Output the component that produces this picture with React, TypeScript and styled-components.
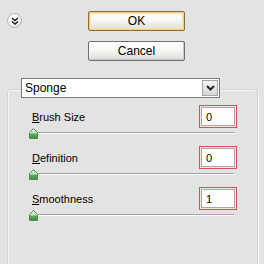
import React from "react";
import styled, { createGlobalStyle } from "styled-components";

const Global = createGlobalStyle`
  html, body { margin: 0; padding: 0; }
  body {
    background: #e3e3e3;
    font-family: "Liberation Sans", Tahoma, Arial, sans-serif;
    font-size: 11px;
    color: #000;
    overflow: hidden;
  }
`;

const Page = styled.div`
  width: 264px;
  height: 264px;
  background: #e3e3e3;
  overflow: hidden;
`;

const TopRow = styled.div`
  display: flex;
  align-items: flex-start;
  padding: 11px 0 0 7px;
`;

const RoundToggle = styled.div`
  width: 15px;
  height: 15px;
  margin-top: 2px;
  border-radius: 50%;
  border: 1px solid #b4b4b4;
  box-sizing: border-box;
  background: radial-gradient(circle at 40% 35%, #ffffff 0%, #f4f4f4 50%, #cfcfcf 100%);
  display: flex;
  align-items: center;
  justify-content: center;
`;

const ButtonColumn = styled.div`
  display: flex;
  flex-direction: column;
  gap: 10px;
  margin-left: 66px;
`;

const PushButton = styled.div<{ $default?: boolean }>`
  width: 97px;
  height: 20px;
  box-sizing: border-box;
  border: 1px solid ${(p) => (p.$default ? "#8a6b3c" : "#6f6f6f")};
  border-radius: 2px;
  background: linear-gradient(#ffffff 0%, #f7f7f5 45%, #e4e4e1 85%, #d2d2cf 100%);
  box-shadow: ${(p) =>
    p.$default
      ? "inset 0 0 0 1px #f6cf86, inset 0 0 0 2px #fbe3ad"
      : "inset -1px -1px 0 #c9c9c6"};
  display: flex;
  align-items: center;
  justify-content: center;
  font-size: 12px;
  line-height: 1;
  color: #000;
`;

const Section = styled.div`
  padding: 17px 6px 0 7px;
`;

const DropdownWrap = styled.div`
  position: relative;
  z-index: 1;
  margin-left: 14px;
  width: 199px;
  height: 20px;
  box-sizing: border-box;
  border: 1px solid #7a7a7a;
  background: #ffffff;
  display: flex;
  align-items: center;
`;

const DropdownText = styled.div`
  flex: 1;
  padding-left: 3px;
  font-size: 12px;
`;

const DropdownArrow = styled.div`
  width: 16px;
  height: 16px;
  margin-right: 1px;
  box-sizing: border-box;
  border: 1px solid #a6a6a6;
  background: linear-gradient(#f4f4f4, #d6d6d6);
  display: flex;
  align-items: center;
  justify-content: center;
`;

const GroupBox = styled.div`
  margin-top: -9px;
  width: 251px;
  height: 200px;
  box-sizing: border-box;
  border: 1px solid #d2d2d2;
  border-radius: 3px;
  box-shadow: inset 1px 1px 0 #f6f6f6, 1px 1px 0 #f6f6f6;
  padding: 15px 20px 0 21px;
  display: flex;
  flex-direction: column;
  gap: 7px;
`;

const Row = styled.div`
  display: flex;
  flex-direction: column;
`;

const RowHead = styled.div`
  display: flex;
  align-items: center;
  justify-content: space-between;
  height: 23px;
`;

const Label = styled.span`
  margin-left: 3px;
  font-size: 11px;
  color: #000;
  & u { text-decoration: underline; }
`;

const InputFrame = styled.div`
  width: 38px;
  height: 23px;
  box-sizing: border-box;
  border: 1px solid #d25255;
  background: #f6e4e4;
  padding: 1px;
`;

const InputInner = styled.div`
  height: 100%;
  box-sizing: border-box;
  border: 1px solid #a8a8a8;
  background: #ffffff;
  padding-left: 4px;
  display: flex;
  align-items: center;
  font-size: 11px;
`;

const Slider = styled.div`
  position: relative;
  height: 11px;
`;

const Track = styled.div`
  margin: 4px 2px 0 3px;
  height: 2px;
  box-sizing: border-box;
  border-top: 1px solid #a2a2a2;
  border-bottom: 1px solid #ffffff;
  border-right: 1px solid #ffffff;
`;

const Thumb = styled.svg`
  position: absolute;
  left: 0;
  top: 0;
`;

const DoubleChevron = () => (
  <svg width="8" height="8" viewBox="0 0 8 8">
    <path d="M1 1 L4 3.5 L7 1 M1 4.5 L4 7 L7 4.5" fill="none" stroke="#1e1e1e" strokeWidth="1.5" />
  </svg>
);

const ArrowDown = () => (
  <svg width="9" height="6" viewBox="0 0 9 6">
    <path d="M1 1 L4.5 4.5 L8 1" fill="none" stroke="#2a2a2a" strokeWidth="2" />
  </svg>
);

const ThumbIcon = () => (
  <Thumb width="9" height="11" viewBox="0 0 9 11">
    <defs>
      <linearGradient id="tg" x1="0" y1="0" x2="0" y2="1">
        <stop offset="0" stopColor="#e8f6e8" />
        <stop offset="0.45" stopColor="#bfe2bf" />
        <stop offset="0.55" stopColor="#5fae5f" />
        <stop offset="1" stopColor="#3f8a3f" />
      </linearGradient>
    </defs>
    <path d="M4.5 0.5 L8.5 4.5 L8.5 10.5 L0.5 10.5 L0.5 4.5 Z" fill="url(#tg)" stroke="#4f8a4f" strokeWidth="1" />
  </Thumb>
);

const fields = [
  { key: "B", rest: "rush Size", value: "0" },
  { key: "D", rest: "efinition", value: "0" },
  { key: "S", rest: "moothness", value: "1" },
];

export default function App() {
  return (
    <Page>
      <Global />
      <TopRow>
        <RoundToggle>
          <DoubleChevron />
        </RoundToggle>
        <ButtonColumn>
          <PushButton $default>OK</PushButton>
          <PushButton>Cancel</PushButton>
        </ButtonColumn>
      </TopRow>
      <Section>
        <DropdownWrap>
          <DropdownText>Sponge</DropdownText>
          <DropdownArrow>
            <ArrowDown />
          </DropdownArrow>
        </DropdownWrap>
        <GroupBox>
          {fields.map((f) => (
            <Row key={f.key}>
              <RowHead>
                <Label>
                  <u>{f.key}</u>
                  {f.rest}
                </Label>
                <InputFrame>
                  <InputInner>{f.value}</InputInner>
                </InputFrame>
              </RowHead>
              <Slider>
                <Track />
                <ThumbIcon />
              </Slider>
            </Row>
          ))}
        </GroupBox>
      </Section>
    </Page>
  );
}
